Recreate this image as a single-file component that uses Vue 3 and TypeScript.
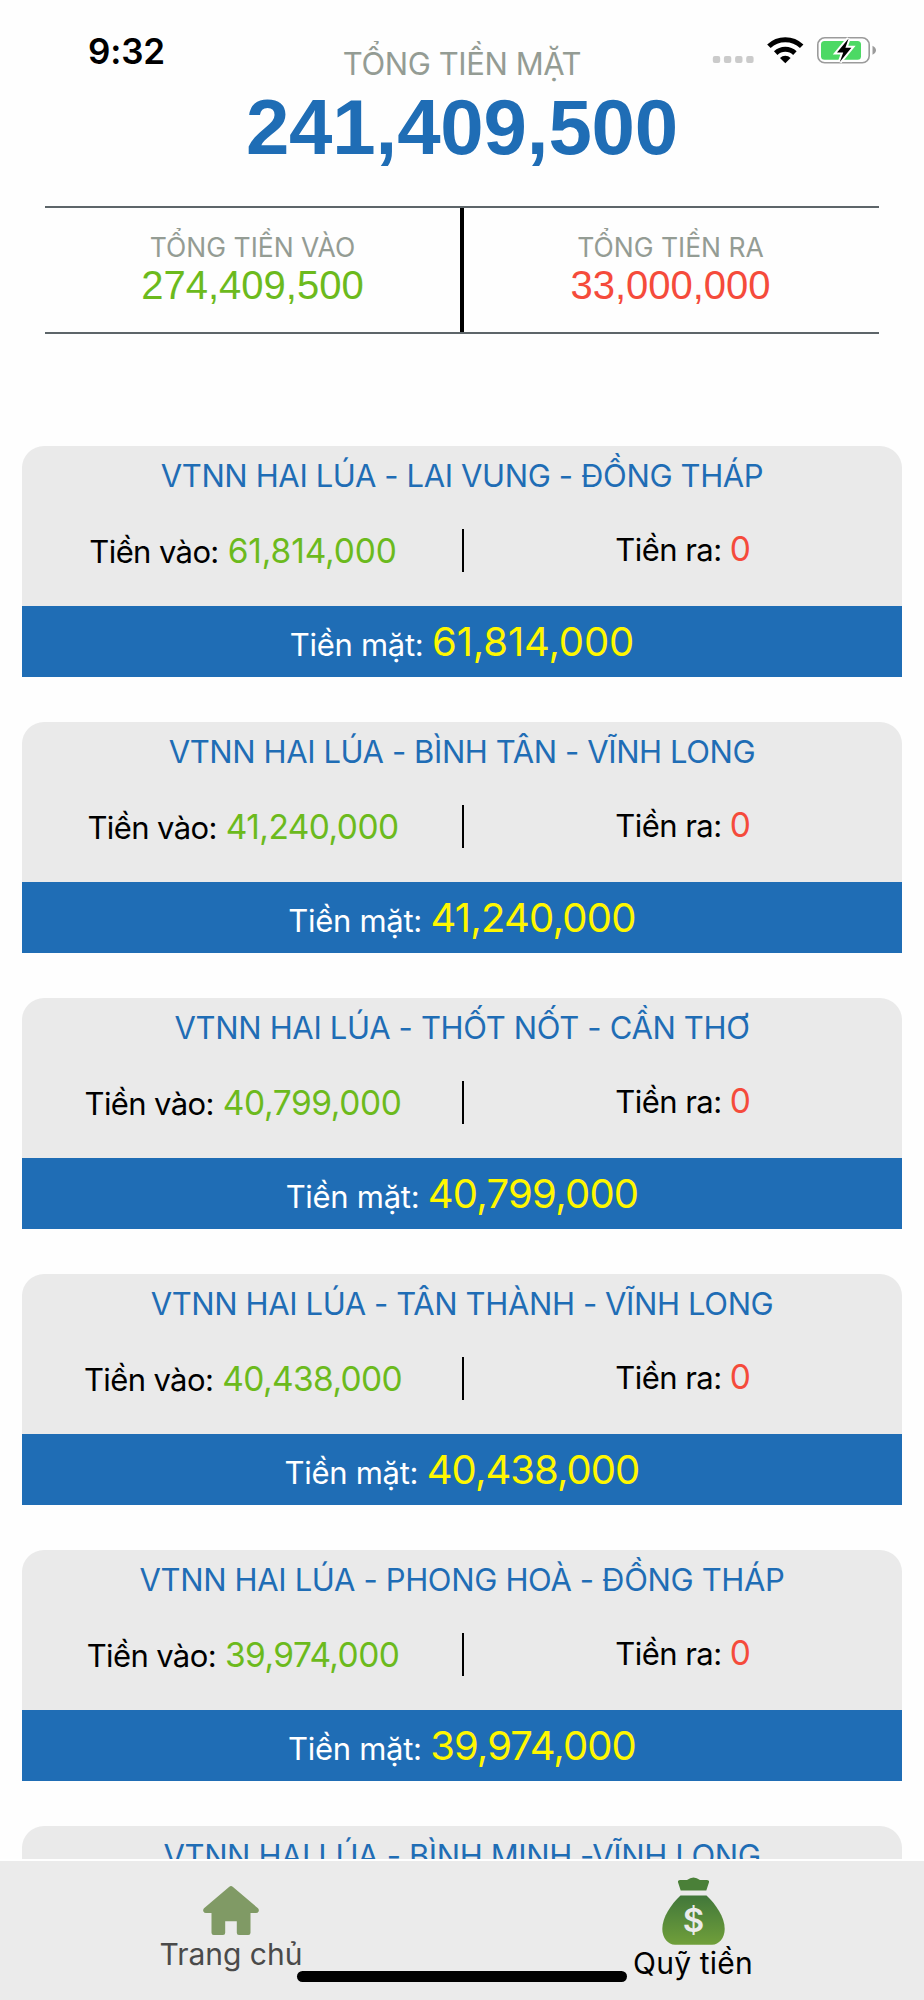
<script setup lang="ts">
interface Branch {
  name: string
  moneyIn: string
  moneyOut: string
  cash: string
  tracking: { name: number; moneyIn: number; cash: number }
}

const summary = {
  cash: '241,409,500',
  moneyIn: '274,409,500',
  moneyOut: '33,000,000',
}

const branches: Branch[] = [
  {
    name: 'VTNN HAI LÚA - LAI VUNG - ĐỒNG THÁP',
    moneyIn: '61,814,000', moneyOut: '0', cash: '61,814,000',
    tracking: { name: -0.37, moneyIn: -0.14, cash: -0.12 },
  },
  {
    name: 'VTNN HAI LÚA - BÌNH TÂN - VĨNH LONG',
    moneyIn: '41,240,000', moneyOut: '0', cash: '41,240,000',
    tracking: { name: -0.4, moneyIn: -0.55, cash: -0.75 },
  },
  {
    name: 'VTNN HAI LÚA - THỐT NỐT - CẦN THƠ',
    moneyIn: '40,799,000', moneyOut: '0', cash: '40,799,000',
    tracking: { name: -0.33, moneyIn: -0.4, cash: -0.75 },
  },
  {
    name: 'VTNN HAI LÚA - TÂN THÀNH - VĨNH LONG',
    moneyIn: '40,438,000', moneyOut: '0', cash: '40,438,000',
    tracking: { name: -0.38, moneyIn: -0.62, cash: -0.95 },
  },
  {
    name: 'VTNN HAI LÚA - PHONG HOÀ - ĐỒNG THÁP',
    moneyIn: '39,974,000', moneyOut: '0', cash: '39,974,000',
    tracking: { name: -0.34, moneyIn: -0.55, cash: -0.9 },
  },
  {
    name: 'VTNN HAI LÚA - BÌNH MINH -VĨNH LONG',
    moneyIn: '', moneyOut: '', cash: '',
    tracking: { name: -0.4, moneyIn: 0, cash: 0 },
  },
]

const spacing = (px: number) => ({ letterSpacing: `${px}px` })
</script>

<template>
  <div class="screen">
    <div class="status-time">9:32</div>
    <svg class="status-icons" viewBox="0 0 190 60" aria-hidden="true">
      <g fill="#cbcbcb">
        <rect x="12.8" y="36" width="7.4" height="7" rx="2" />
        <rect x="23.9" y="36" width="7.4" height="7" rx="2" />
        <rect x="35.1" y="36" width="7.4" height="7" rx="2" />
        <rect x="46.2" y="36" width="7.4" height="7" rx="2" />
      </g>
      <g fill="none" stroke="#000" stroke-width="5">
        <path d="M68.9 26.3 A23.6 23.6 0 0 1 101.7 26.3" />
        <path d="M75.7 33.1 A13.8 13.8 0 0 1 94.9 33.1" />
      </g>
      <path d="M85.3 43.2 L80 37.9 A7.5 7.5 0 0 1 90.6 37.9 Z" />
      <rect x="117.8" y="17.8" width="51.4" height="25" rx="7" fill="none" stroke="#9b9b9b" stroke-width="1.6" />
      <path d="M172.5 25.8 Q176 27.5 176 30.3 Q176 33.2 172.5 34.8 Z" fill="#9b9b9b" />
      <rect x="121" y="21" width="40" height="18.8" rx="3.5" fill="#4cd964" />
      <path
        d="M148.6 18.5 L137 32.6 H143.2 L139.8 42 L151.4 27.8 H145.4 Z"
        stroke="#fff" stroke-width="4" paint-order="stroke" stroke-linejoin="miter"
      />
    </svg>

    <header class="header">
      <div class="header-label">TỔNG TIỀN MẶT</div>
      <div class="header-value">{{ summary.cash }}</div>
    </header>

    <section class="totals">
      <div class="total">
        <div class="total-label">TỔNG TIỀN VÀO</div>
        <div class="total-value in">{{ summary.moneyIn }}</div>
      </div>
      <div class="totals-divider"></div>
      <div class="total total-out">
        <div class="total-label">TỔNG TIỀN RA</div>
        <div class="total-value out">{{ summary.moneyOut }}</div>
      </div>
    </section>

    <main class="list">
      <article v-for="b in branches" :key="b.name" class="card">
        <div class="card-body">
          <h2 class="card-title" :style="spacing(b.tracking.name)">{{ b.name }}</h2>
          <div v-if="b.cash" class="flows">
            <div class="flow flow-in">
              <span class="label label-in">Tiền vào:</span>
              <span class="amount in" :style="spacing(b.tracking.moneyIn)">{{ b.moneyIn }}</span>
            </div>
            <div class="flow-divider"></div>
            <div class="flow flow-out">
              <span class="label label-out">Tiền ra:</span>
              <span class="amount out">{{ b.moneyOut }}</span>
            </div>
          </div>
        </div>
        <div v-if="b.cash" class="card-cash">
          <span class="label label-cash">Tiền mặt:</span>
          <span class="cash" :style="spacing(b.tracking.cash)">{{ b.cash }}</span>
        </div>
      </article>
    </main>

    <nav class="tabs">
      <a class="tab tab-home">
        <svg class="icon-home" viewBox="0 0 56 49" aria-hidden="true">
          <path
            d="M26.3 .7 Q28 -.7 29.7 .7 L55 22.3 Q56.3 23.8 55.6 25.4 Q54.8 27 53 27 H47.5 V46.8 Q47.5 49 45.3 49 H36 Q33.8 49 33.8 46.8 V35.2 H22.2 V46.8 Q22.2 49 20 49 H10.7 Q8.5 49 8.5 46.8 V27 H3 Q1.2 27 .4 25.4 Q-.3 23.8 1 22.3 Z"
            fill="#809a65"
          />
        </svg>
        <span>Trang chủ</span>
      </a>
      <a class="tab tab-fund">
        <svg class="icon-fund" viewBox="0 0 63 68" aria-hidden="true">
          <defs>
            <linearGradient id="bag" x1="0" y1="0" x2="0" y2="1">
              <stop offset="0" stop-color="#41773a" />
              <stop offset="1" stop-color="#709f3a" />
            </linearGradient>
          </defs>
          <path d="M18.7 13.5 L16 5.2 Q15.6 3 18 3 H25 Q31.5 -2 38 3 H45 Q47.4 3 47 5.2 L44.3 13.5 Z" fill="#4a8038" />
          <path
            d="M18.5 18.5 H44.5 C54 27.5 62.7 40 62.7 52 C62.7 61 57 67.7 50 67.7 H13 C6 67.7 .3 61 .3 52 C.3 40 9 27.5 18.5 18.5 Z"
            fill="url(#bag)"
          />
          <text x="31.5" y="55" class="dollar">$</text>
        </svg>
        <span>Quỹ tiền</span>
      </a>
    </nav>
    <div class="home-indicator"></div>
  </div>
</template>

<style>
body {
  margin: 0;
  background: #fff;
}
</style>

<style scoped>
.screen {
  position: relative;
  display: flex;
  flex-direction: column;
  box-sizing: border-box;
  width: 924px;
  height: 2000px;
  padding-top: 45px;
  overflow: hidden;
  background: #fefefe;
  color: #000;
  font-family: Inter, 'Noto Sans', sans-serif;
}
.status-time {
  position: absolute;
  top: 31px;
  left: 88px;
  font-size: 35px;
  font-weight: 600;
  line-height: 40px;
  letter-spacing: -0.2px;
}
.status-icons {
  position: absolute;
  top: 20px;
  left: 700px;
  width: 190px;
  height: 60px;
}

.header {
  text-align: center;
}
.header-label {
  height: 38px;
  color: #949c94;
  font-size: 31px;
  line-height: 38px;
  letter-spacing: -0.42px;
  clip-path: inset(-4px 0 0 0);
}
.header-value {
  color: #1f6db5;
  font: 700 78px/88px 'Liberation Sans', Arial, sans-serif;
  letter-spacing: -0.14px;
}

.totals {
  display: grid;
  flex: none;
  grid-template-columns: 415px 4px 1fr;
  box-sizing: border-box;
  height: 128px;
  margin: 35px 45px 0;
  border-top: 2px solid #5d6569;
  border-bottom: 2px solid #5d6569;
}
.total {
  padding-top: 23px;
  text-align: center;
}
.total-out {
  padding-right: 2px;
}
.total-label {
  height: 32px;
  color: #949c94;
  font-size: 26.5px;
  line-height: 32px;
  clip-path: inset(-3px 0 0 0);
}
.total-value {
  font: 400 40px/44px 'Liberation Sans', Arial, sans-serif;
}
.totals-divider {
  background: #000;
}
.in {
  color: #6cba1d;
}
.out {
  color: #f54b3b;
}

.list {
  display: flex;
  flex: 1;
  flex-direction: column;
  gap: 45px;
  min-height: 0;
  padding: 112px 22px 0;
  overflow: hidden;
}
.card {
  flex: none;
  overflow: hidden;
  border-radius: 22px 22px 0 0;
}
.card-body {
  box-sizing: border-box;
  height: 160px;
  padding-top: 11px;
  background: #eaeaea;
}
.card-title {
  height: 38px;
  margin: 0;
  color: #1f6db5;
  font-size: 31px;
  font-weight: 400;
  line-height: 38px;
  text-align: center;
  clip-path: inset(-4px 0 0 0);
}
.flows {
  display: grid;
  grid-template-columns: 440px 2px 1fr;
  height: 44px;
  margin-top: 34px;
}
.flow {
  display: flex;
  align-items: baseline;
  justify-content: center;
  line-height: 44px;
}
.flow-in {
  gap: 9px;
  padding-left: 2px;
}
.flow-out {
  gap: 8px;
  margin-top: -2px;
}
.flow-divider {
  height: 43px;
}
.flow-divider {
  background: #000;
}
.label {
  font-size: 31px;
}
.label-in {
  letter-spacing: -0.61px;
}
.label-out {
  letter-spacing: -0.53px;
}
.label-cash {
  letter-spacing: -0.29px;
}
.amount {
  font-size: 33.5px;
}
.card-cash {
  display: flex;
  align-items: baseline;
  justify-content: center;
  gap: 8.5px;
  box-sizing: border-box;
  height: 71px;
  padding-top: 1px;
  background: #1f6db5;
  color: #fff;
  line-height: 70px;
}
.cash {
  color: #fff700;
  font-size: 40px;
}

.tabs {
  display: flex;
  flex: none;
  box-sizing: border-box;
  height: 141px;
  border-top: 2px solid #fff;
  background: #ebebeb;
}
.tab {
  display: flex;
  flex: 1;
  flex-direction: column;
  align-items: center;
  font-size: 30px;
  line-height: 36px;
}
.tab-home {
  gap: 1px;
  padding-top: 25px;
  color: #4a4a4a;
}
.tab-fund {
  padding-top: 16px;
  letter-spacing: 0.2px;
}
.icon-home {
  width: 56px;
  height: 49px;
}
.icon-fund {
  width: 63px;
  height: 68px;
}
.dollar {
  fill: #ebebeb;
  font-size: 33px;
  font-weight: 600;
  text-anchor: middle;
}
.home-indicator {
  position: absolute;
  bottom: 18px;
  left: 297px;
  width: 330px;
  height: 11px;
  border-radius: 6px;
  background: #000;
}
</style>
